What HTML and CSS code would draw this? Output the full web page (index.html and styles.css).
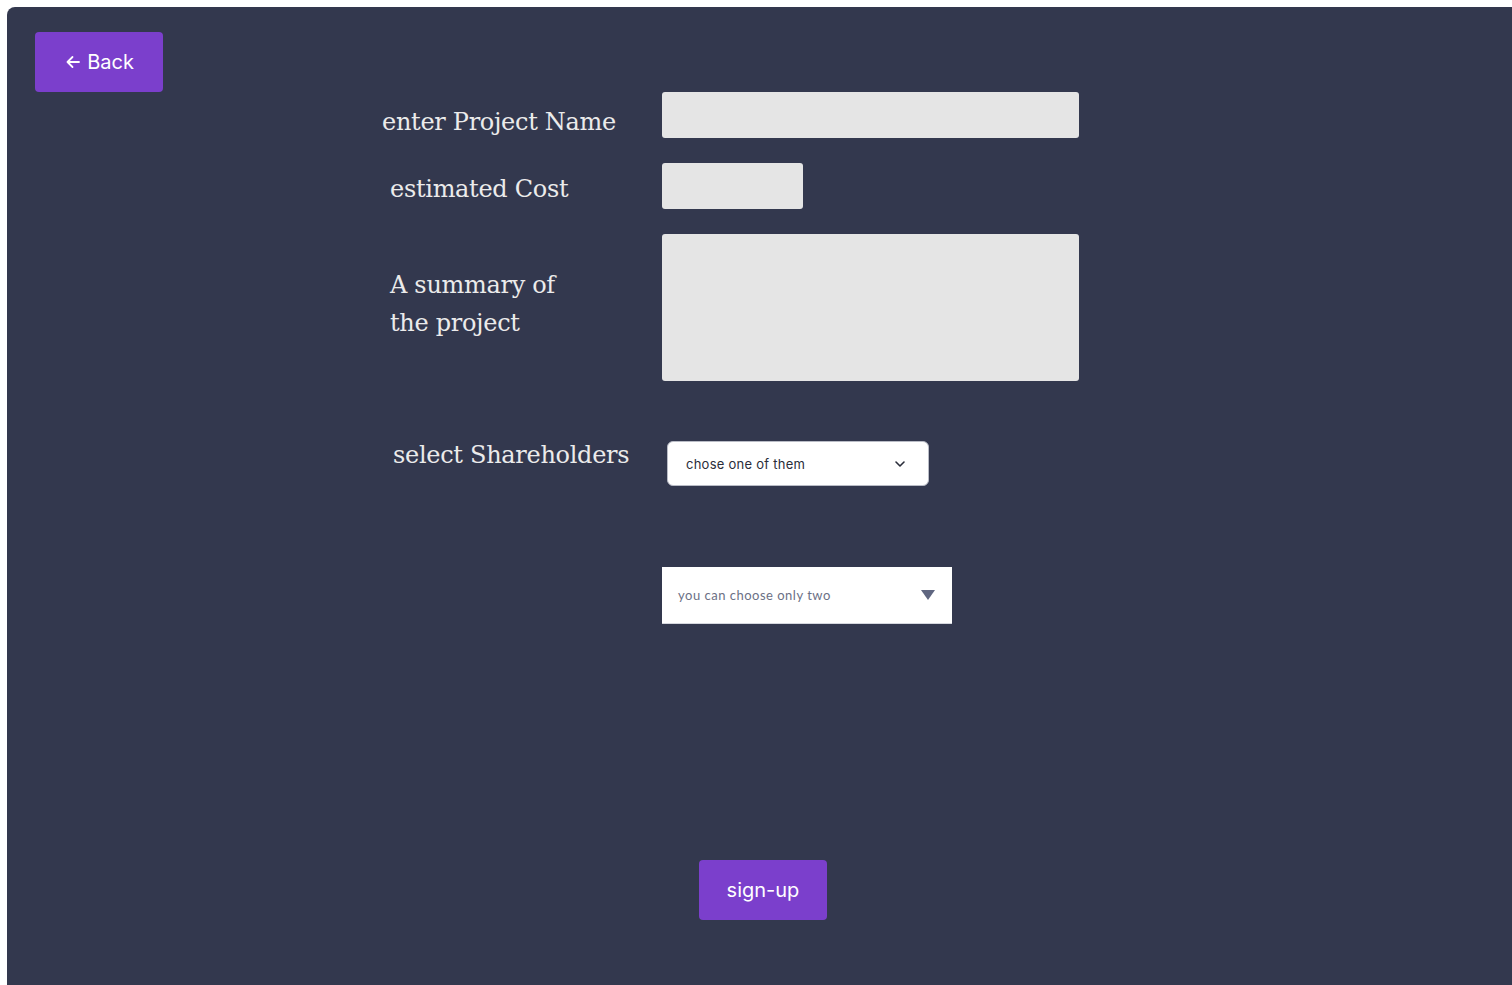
FILE: index.html
```html
<!DOCTYPE html>
<html lang="en">
<head>
<meta charset="utf-8">
<title>New Project</title>
<link rel="stylesheet" href="styles.css">
</head>
<body>
<main class="page">
  <button class="btn btn-back" type="button">
    <svg class="back-icon" width="16" height="16" viewBox="0 0 16 16" fill="none" stroke="currentColor" stroke-width="1.8" stroke-linecap="round" stroke-linejoin="round"><path d="M14 8H2.5M7.5 3L2.5 8l5 5"/></svg>
    <span>Back</span>
  </button>

  <form class="form">
    <div class="row row-name">
      <label class="label label-name">enter Project Name</label>
      <div class="field field-wide"></div>
    </div>
    <div class="row row-cost">
      <label class="label label-cost">estimated Cost</label>
      <div class="field field-small"></div>
    </div>
    <div class="row row-summary">
      <label class="label label-summary">A summary of<br>the project</label>
      <div class="field field-area"></div>
    </div>
    <div class="row row-share">
      <label class="label label-share">select Shareholders</label>
      <div class="select-a">
        <span>chose one of them</span>
        <svg width="14" height="14" viewBox="0 0 14 14" fill="none" stroke="#2a2d3a" stroke-width="1.6" stroke-linecap="round" stroke-linejoin="round"><path d="M3 5l4 4 4-4"/></svg>
      </div>
    </div>
    <div class="row row-multi">
      <div class="select-b">
        <span>you can choose only two</span>
        <svg width="14" height="12" viewBox="0 0 14 12"><path d="M0 1h14L7 11z" fill="#5f6680"/></svg>
      </div>
    </div>
  </form>

  <div class="submit-row">
    <button class="btn btn-submit" type="button">sign-up</button>
  </div>
</main>
</body>
</html>
```

FILE: styles.css
```css
html, body {
  margin: 0;
  padding: 0;
  background: #ffffff;
}
body {
  padding: 7px 0 0 7px;
}
.page {
  background: #33384e;
  border-radius: 8px 0 0 0;
  min-height: 978px;
  box-sizing: border-box;
  padding: 25px 0 0 28px;
  display: flex;
  flex-direction: column;
  align-items: flex-start;
}
.btn {
  border: none;
  background: #7b3fcc;
  color: #ffffff;
  font-family: Inter, "Liberation Sans", sans-serif;
  font-size: 20px;
  border-radius: 4px;
  width: 128px;
  height: 60px;
  display: flex;
  align-items: center;
  justify-content: center;
  cursor: pointer;
  padding: 0;
}
.btn-back {
  gap: 6px;
  padding-left: 1px;
}
.btn-back span {
  margin-top: -1px;
}
.form {
  margin-left: 347px;
  display: flex;
  flex-direction: column;
}
.row {
  display: flex;
  align-items: flex-start;
}
.label {
  width: 280px;
  box-sizing: border-box;
  font-family: "DejaVu Serif", "Liberation Serif", serif;
  font-size: 24px;
  color: #ebebeb;
  line-height: 38px;
  letter-spacing: -0.3px;
}
.label-name { padding-top: 11px; }
.label-cost { padding-left: 8px; padding-top: 7px; }
.label-summary { padding-left: 8px; padding-top: 32px; }
.label-share { padding-left: 11px; margin-top: -5px; }
.field {
  background: #e5e5e5;
  border-radius: 3px;
}
.field-wide { width: 417px; height: 46px; }
.field-small { width: 141px; height: 46px; }
.field-area { width: 417px; height: 147px; }
.row-name { height: 46px; }
.row-cost { margin-top: 25px; height: 46px; }
.row-summary { margin-top: 25px; }
.row-share { margin-top: 60px; height: 45px; }
.row-multi { margin-top: 81px; padding-left: 280px; }
.select-a {
  margin-left: 5px;
  width: 262px;
  height: 45px;
  box-sizing: border-box;
  background: #ffffff;
  border: 1px solid #b9bcc6;
  border-radius: 6px;
  display: flex;
  align-items: center;
  justify-content: space-between;
  padding: 0 21px 0 18px;
  font-family: Inter, "Liberation Sans", sans-serif;
  font-size: 13px;
  letter-spacing: 0.25px;
  color: #2a2d3a;
}
.select-b {
  width: 290px;
  height: 57px;
  box-sizing: border-box;
  background: #ffffff;
  border-bottom: 1px solid #d5d7de;
  display: flex;
  align-items: center;
  justify-content: space-between;
  padding: 0 17px 0 16px;
  font-family: Lato, "Open Sans", sans-serif;
  font-size: 13px;
  letter-spacing: 0.5px;
  color: #6b7085;
}
.select-b svg { margin-top: -1px; }
.submit-row {
  margin-top: 236px;
  margin-left: 664px;
}
```
